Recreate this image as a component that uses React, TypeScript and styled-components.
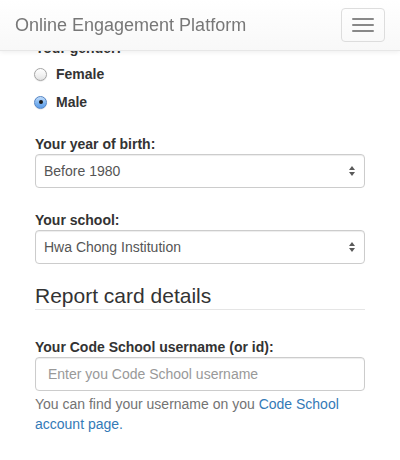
import React from "react";
import styled, { createGlobalStyle } from "styled-components";

const Global = createGlobalStyle`
  html, body { margin: 0; padding: 0; background: #fff; }
  body {
    font-family: "Liberation Sans", Arial, Helvetica, sans-serif;
    font-size: 14px;
    line-height: 20px;
    color: #333;
    overflow: hidden;
  }
  * { box-sizing: border-box; }
`;

const Navbar = styled.nav`
  position: fixed;
  top: 0;
  left: 0;
  right: 0;
  z-index: 10;
  height: 51px;
  display: flex;
  align-items: flex-start;
  justify-content: space-between;
  padding: 0 15px;
  background-image: linear-gradient(to bottom, #ffffff 0%, #f8f8f8 100%);
  border-bottom: 1px solid #e7e7e7;
  box-shadow: inset 0 1px 0 rgba(255, 255, 255, 0.15), 0 1px 5px rgba(0, 0, 0, 0.075);
`;

const Brand = styled.a`
  display: block;
  padding: 15px 0;
  font-size: 18px;
  line-height: 20px;
  color: #777;
  text-decoration: none;
`;

const Toggle = styled.button`
  margin-top: 8px;
  width: 44px;
  height: 34px;
  padding: 9px 10px;
  border: 1px solid #ddd;
  border-radius: 4px;
  background: transparent;
  display: flex;
  flex-direction: column;
  justify-content: center;
  gap: 4px;
`;

const Bar = styled.span`
  display: block;
  width: 22px;
  height: 2px;
  border-radius: 1px;
  background: #888;
`;

const Form = styled.form`
  padding: 38px 35px 20px;
  display: flex;
  flex-direction: column;
`;

const Group = styled.div<{ $gap?: number }>`
  display: flex;
  flex-direction: column;
  margin-bottom: ${(p) => p.$gap ?? 22}px;
`;

const Label = styled.label`
  display: block;
  font-weight: bold;
  line-height: 20px;
  color: #333;
`;

const RadioRow = styled.label<{ $top: number }>`
  display: flex;
  align-items: center;
  margin-top: ${(p) => p.$top}px;
  font-weight: bold;
  line-height: 20px;
  color: #333;
  cursor: pointer;
`;

const RadioDot = styled.span<{ $checked?: boolean }>`
  position: relative;
  width: 13px;
  height: 13px;
  margin-left: -1px;
  margin-right: 9px;
  border-radius: 50%;
  border: 1px solid ${(p) => (p.$checked ? "#5585c4" : "#a5a5a5")};
  background: ${(p) =>
    p.$checked
      ? "linear-gradient(to bottom, #c4defb 0%, #7db4f0 55%, #5c9ce8 100%)"
      : "linear-gradient(to bottom, #ffffff 0%, #f0f0f0 60%, #e2e2e2 100%)"};
  box-shadow: 0 0.5px 1px rgba(0, 0, 0, 0.15);
  &::after {
    content: "";
    display: ${(p) => (p.$checked ? "block" : "none")};
    position: absolute;
    left: 50%;
    top: 50%;
    width: 4px;
    height: 4px;
    margin: -2px 0 0 -2px;
    border-radius: 50%;
    background: #1b1b1b;
  }
`;

const SelectWrap = styled.div`
  position: relative;
`;

const Select = styled.select`
  display: block;
  width: 100%;
  height: 34px;
  padding: 0 30px 0 8px;
  font-family: inherit;
  font-size: 14px;
  color: #555;
  background: #fff;
  border: 1px solid #ccc;
  border-radius: 4px;
  box-shadow: inset 0 1px 1px rgba(0, 0, 0, 0.075);
  appearance: none;
  -webkit-appearance: none;
  outline: none;
`;

const Arrows = styled.svg`
  position: absolute;
  right: 10px;
  top: 12px;
  pointer-events: none;
`;

const Legend = styled.h2`
  margin: 0 0 27px;
  font-size: 21px;
  font-weight: normal;
  line-height: 27px;
  color: #333;
  border-bottom: 1px solid #e5e5e5;
`;

const Input = styled.input`
  display: block;
  width: 100%;
  height: 34px;
  padding: 6px 12px;
  font-family: inherit;
  font-size: 14px;
  color: #555;
  border: 1px solid #ccc;
  border-radius: 4px;
  box-shadow: inset 0 1px 1px rgba(0, 0, 0, 0.075);
  outline: none;
  &::placeholder { color: #999; }
`;

const Help = styled.p`
  margin: 3px 0 0;
  color: #737373;
  line-height: 20px;
`;

const Link = styled.a`
  color: #337ab7;
  text-decoration: none;
`;

const SelectArrows = () => (
  <Arrows width="6" height="11" viewBox="0 0 6 11">
    <path d="M3 0 L6 4 L0 4 Z" fill="#5a5a5a" />
    <path d="M0 6 L6 6 L3 10 Z" fill="#5a5a5a" />
  </Arrows>
);

export default function App() {
  return (
    <>
      <Global />
      <Navbar>
        <Brand href="#">Online Engagement Platform</Brand>
        <Toggle type="button" aria-label="Toggle navigation">
          <Bar />
          <Bar />
          <Bar />
        </Toggle>
      </Navbar>
      <Form>
        <Group $gap={22}>
          <Label>Your gender:</Label>
          <RadioRow $top={6}>
            <RadioDot />
            Female
          </RadioRow>
          <RadioRow $top={8}>
            <RadioDot $checked />
            Male
          </RadioRow>
        </Group>
        <Group $gap={22}>
          <Label>Your year of birth:</Label>
          <SelectWrap>
            <Select defaultValue="before1980">
              <option value="before1980">Before 1980</option>
            </Select>
            <SelectArrows />
          </SelectWrap>
        </Group>
        <Group $gap={18}>
          <Label>Your school:</Label>
          <SelectWrap>
            <Select defaultValue="hci">
              <option value="hci">Hwa Chong Institution</option>
            </Select>
            <SelectArrows />
          </SelectWrap>
        </Group>
        <Legend>Report card details</Legend>
        <Group $gap={0}>
          <Label>Your Code School username (or id):</Label>
          <Input placeholder="Enter you Code School username" />
          <Help>
            You can find your username on you <Link href="#">Code School account page.</Link>
          </Help>
        </Group>
      </Form>
    </>
  );
}
